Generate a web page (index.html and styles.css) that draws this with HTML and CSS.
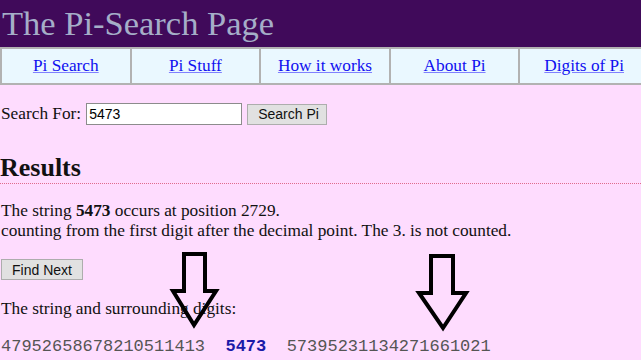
FILE: index.html
```html
<!DOCTYPE html>
<html>
  <head>
    <link rel="stylesheet" href="styles.css">
  </head>
  <body>
    <div class="page">
      <div class="header">
        <h1>The Pi-Search Page</h1>
      </div>
      <div class="navwrap">
        <div class="nav">
          <div class="cell"><a href="#">Pi Search</a></div>
          <div class="cell"><a href="#">Pi Stuff</a></div>
          <div class="cell"><a href="#">How it works</a></div>
          <div class="cell"><a href="#">About Pi</a></div>
          <div class="cell"><a href="#">Digits of Pi</a></div>
        </div>
      </div>

      <form class="search" onsubmit="event.preventDefault()">
        <label for="q">Search For:</label>
        <input type="text" id="q" name="q" value="5473">
        <input type="submit" value="Search Pi">
      </form>

      <h2>Results</h2>
      <p class="found">The string <b>5473</b> occurs at position 2729.<br>
        counting from the first digit after the decimal point. The 3. is not counted.</p>

      <button class="next">Find Next</button>

      <p class="around">The string and surrounding digits:</p>
      <div class="digits">47952658678210511413  <b>5473</b>  57395231134271661021</div>

      <svg class="arrow arrow-one" width="56" height="84" viewBox="0 0 56 84">
        <polygon points="16,4 37,4 37,41 48,41 26,75 5,41 16,41" />
      </svg>
      <svg class="arrow arrow-two" width="56" height="84" viewBox="0 0 56 84">
        <polygon points="16,4 38,4 38,41 51,41 28,76 4,41 16,41" />
      </svg>
    </div>
  </body>
</html>
```

FILE: styles.css
```css
body {
  margin: 0;
  background-color: #fedcfe;
  font-family: "Liberation Serif", "Times New Roman", serif;
  font-size: 17.3px;
  color: #111;
  overflow: hidden;
}

.page {
  position: relative;
  height: 360px;
}

.header {
  background-color: #400a5a;
  height: 47px;
}

.header h1 {
  margin: 0;
  padding-left: 2px;
  font-size: 34.5px;
  font-weight: normal;
  line-height: 47px;
  color: #a5aec8;
}

.navwrap {
  overflow: hidden;
}

.nav {
  display: flex;
  width: 648px;
  background-color: #eaf8ff;
  border-top: 2px solid #b2b2b2;
  border-bottom: 2px solid #b2b2b2;
  border-left: 2px solid #b2b2b2;
}

.cell {
  flex: 1;
  text-align: center;
  line-height: 34px;
  border-right: 2px solid #b2b2b2;
}

.cell a {
  color: #1010f0;
  text-decoration-color: #8080ff;
}

.search {
  display: flex;
  align-items: center;
  gap: 5px;
  margin: 18px 0 0 1px;
}

.search input[type="text"] {
  width: 150px;
  height: 16px;
  padding: 2px 2px;
  border: 1px solid #8c8c8c;
  font-family: "Liberation Sans", Arial, sans-serif;
  font-size: 14px;
  background: #fff;
}

.search input[type="submit"],
.next {
  height: 21px;
  padding: 0 10px;
  background-color: #e1e1e1;
  border: 1px solid #adadad;
  font-family: "Liberation Sans", Arial, sans-serif;
  font-size: 14px;
  color: #111;
  white-space: nowrap;
}

.search input[type="submit"] {
  width: 80px;
}

h2 {
  margin: 28px 0 0;
  font-size: 26px;
  line-height: 30px;
  border-bottom: 1px dotted #e06a8c;
}

.found {
  margin: 17px 0 0 1px;
  line-height: 20px;
}

.next {
  display: block;
  width: 82px;
  margin: 18px 0 0 1px;
}

.around {
  margin: 19px 0 0 1px;
  line-height: 20px;
}

.digits {
  margin: 18px 0 0 1px;
  font-family: "Liberation Mono", "Courier New", monospace;
  font-size: 17px;
  line-height: 20px;
  color: #555;
  white-space: pre;
}

.digits b {
  color: #1a1aa8;
}

.arrow {
  position: absolute;
}

.arrow polygon {
  fill: none;
  stroke: #000;
  stroke-width: 4;
  stroke-linejoin: miter;
}

.arrow-one {
  left: 168px;
  top: 250px;
}

.arrow-two {
  left: 415px;
  top: 252px;
}
```
